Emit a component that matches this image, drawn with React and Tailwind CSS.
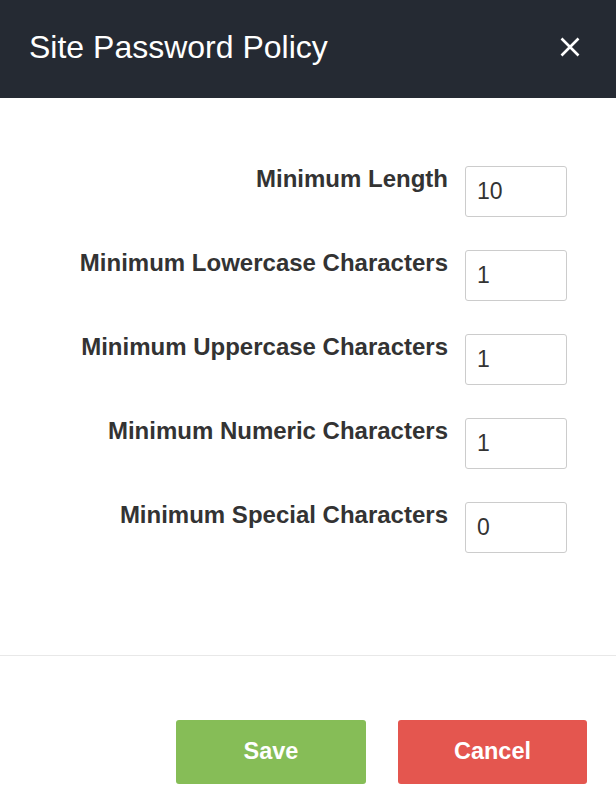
import { useState } from 'react';

const fields = [
  { name: 'minLength', label: 'Minimum Length', value: '10' },
  { name: 'minLower', label: 'Minimum Lowercase Characters', value: '1' },
  { name: 'minUpper', label: 'Minimum Uppercase Characters', value: '1' },
  { name: 'minNumeric', label: 'Minimum Numeric Characters', value: '1' },
  { name: 'minSpecial', label: 'Minimum Special Characters', value: '0' },
];

export default function App() {
  const [values, setValues] = useState(
    Object.fromEntries(fields.map(f => [f.name, f.value]))
  );

  const handleChange = (e) => {
    const { name, value } = e.target;
    setValues(prev => ({ ...prev, [name]: value }));
  };

  return (
    <div className="w-[616px] h-[812px] bg-white flex flex-col font-['Liberation_Sans',Arial,sans-serif]">
      {/* Header */}
      <div className="h-[98px] bg-[#252a33] flex items-start justify-between pl-[29px] pr-[36px] pt-[23px]">
        <h1 className="text-[32px] text-white font-normal leading-normal">Site Password Policy</h1>
        <button className="mt-[14px] w-[20px] h-[20px] text-white">
          <svg viewBox="0 0 20 20" className="w-[20px] h-[20px]" fill="none" stroke="currentColor" strokeWidth="2.6">
            <path d="M1.5 1.5L18.5 18.5M18.5 1.5L1.5 18.5" />
          </svg>
        </button>
      </div>

      {/* Form */}
      <div className="flex flex-col gap-[33px] pt-[68px] pr-[49px] pb-[102px]">
        {fields.map(f => (
          <div key={f.name} className="flex items-start gap-[17px]">
            <label className="flex-1 text-right text-[24px] font-bold text-[#333] leading-[24px] mt-[1px]">
              {f.label}
            </label>
            <input
              type="text"
              name={f.name}
              value={values[f.name]}
              onChange={handleChange}
              className="w-[102px] h-[51px] border border-[#ccc] rounded-[3px] px-[11px] text-[23px] text-[#333] outline-none"
            />
          </div>
        ))}
      </div>

      {/* Footer */}
      <div className="border-t border-[#e8e8e8] flex justify-end gap-[32px] pt-[64px] pr-[29px]">
        <button className="w-[190px] h-[64px] rounded-[3px] bg-[#86bd57] text-white text-[23.5px] font-bold">
          Save
        </button>
        <button className="w-[189px] h-[64px] rounded-[3px] bg-[#e4564f] text-white text-[23.5px] font-bold">
          Cancel
        </button>
      </div>
    </div>
  );
}
